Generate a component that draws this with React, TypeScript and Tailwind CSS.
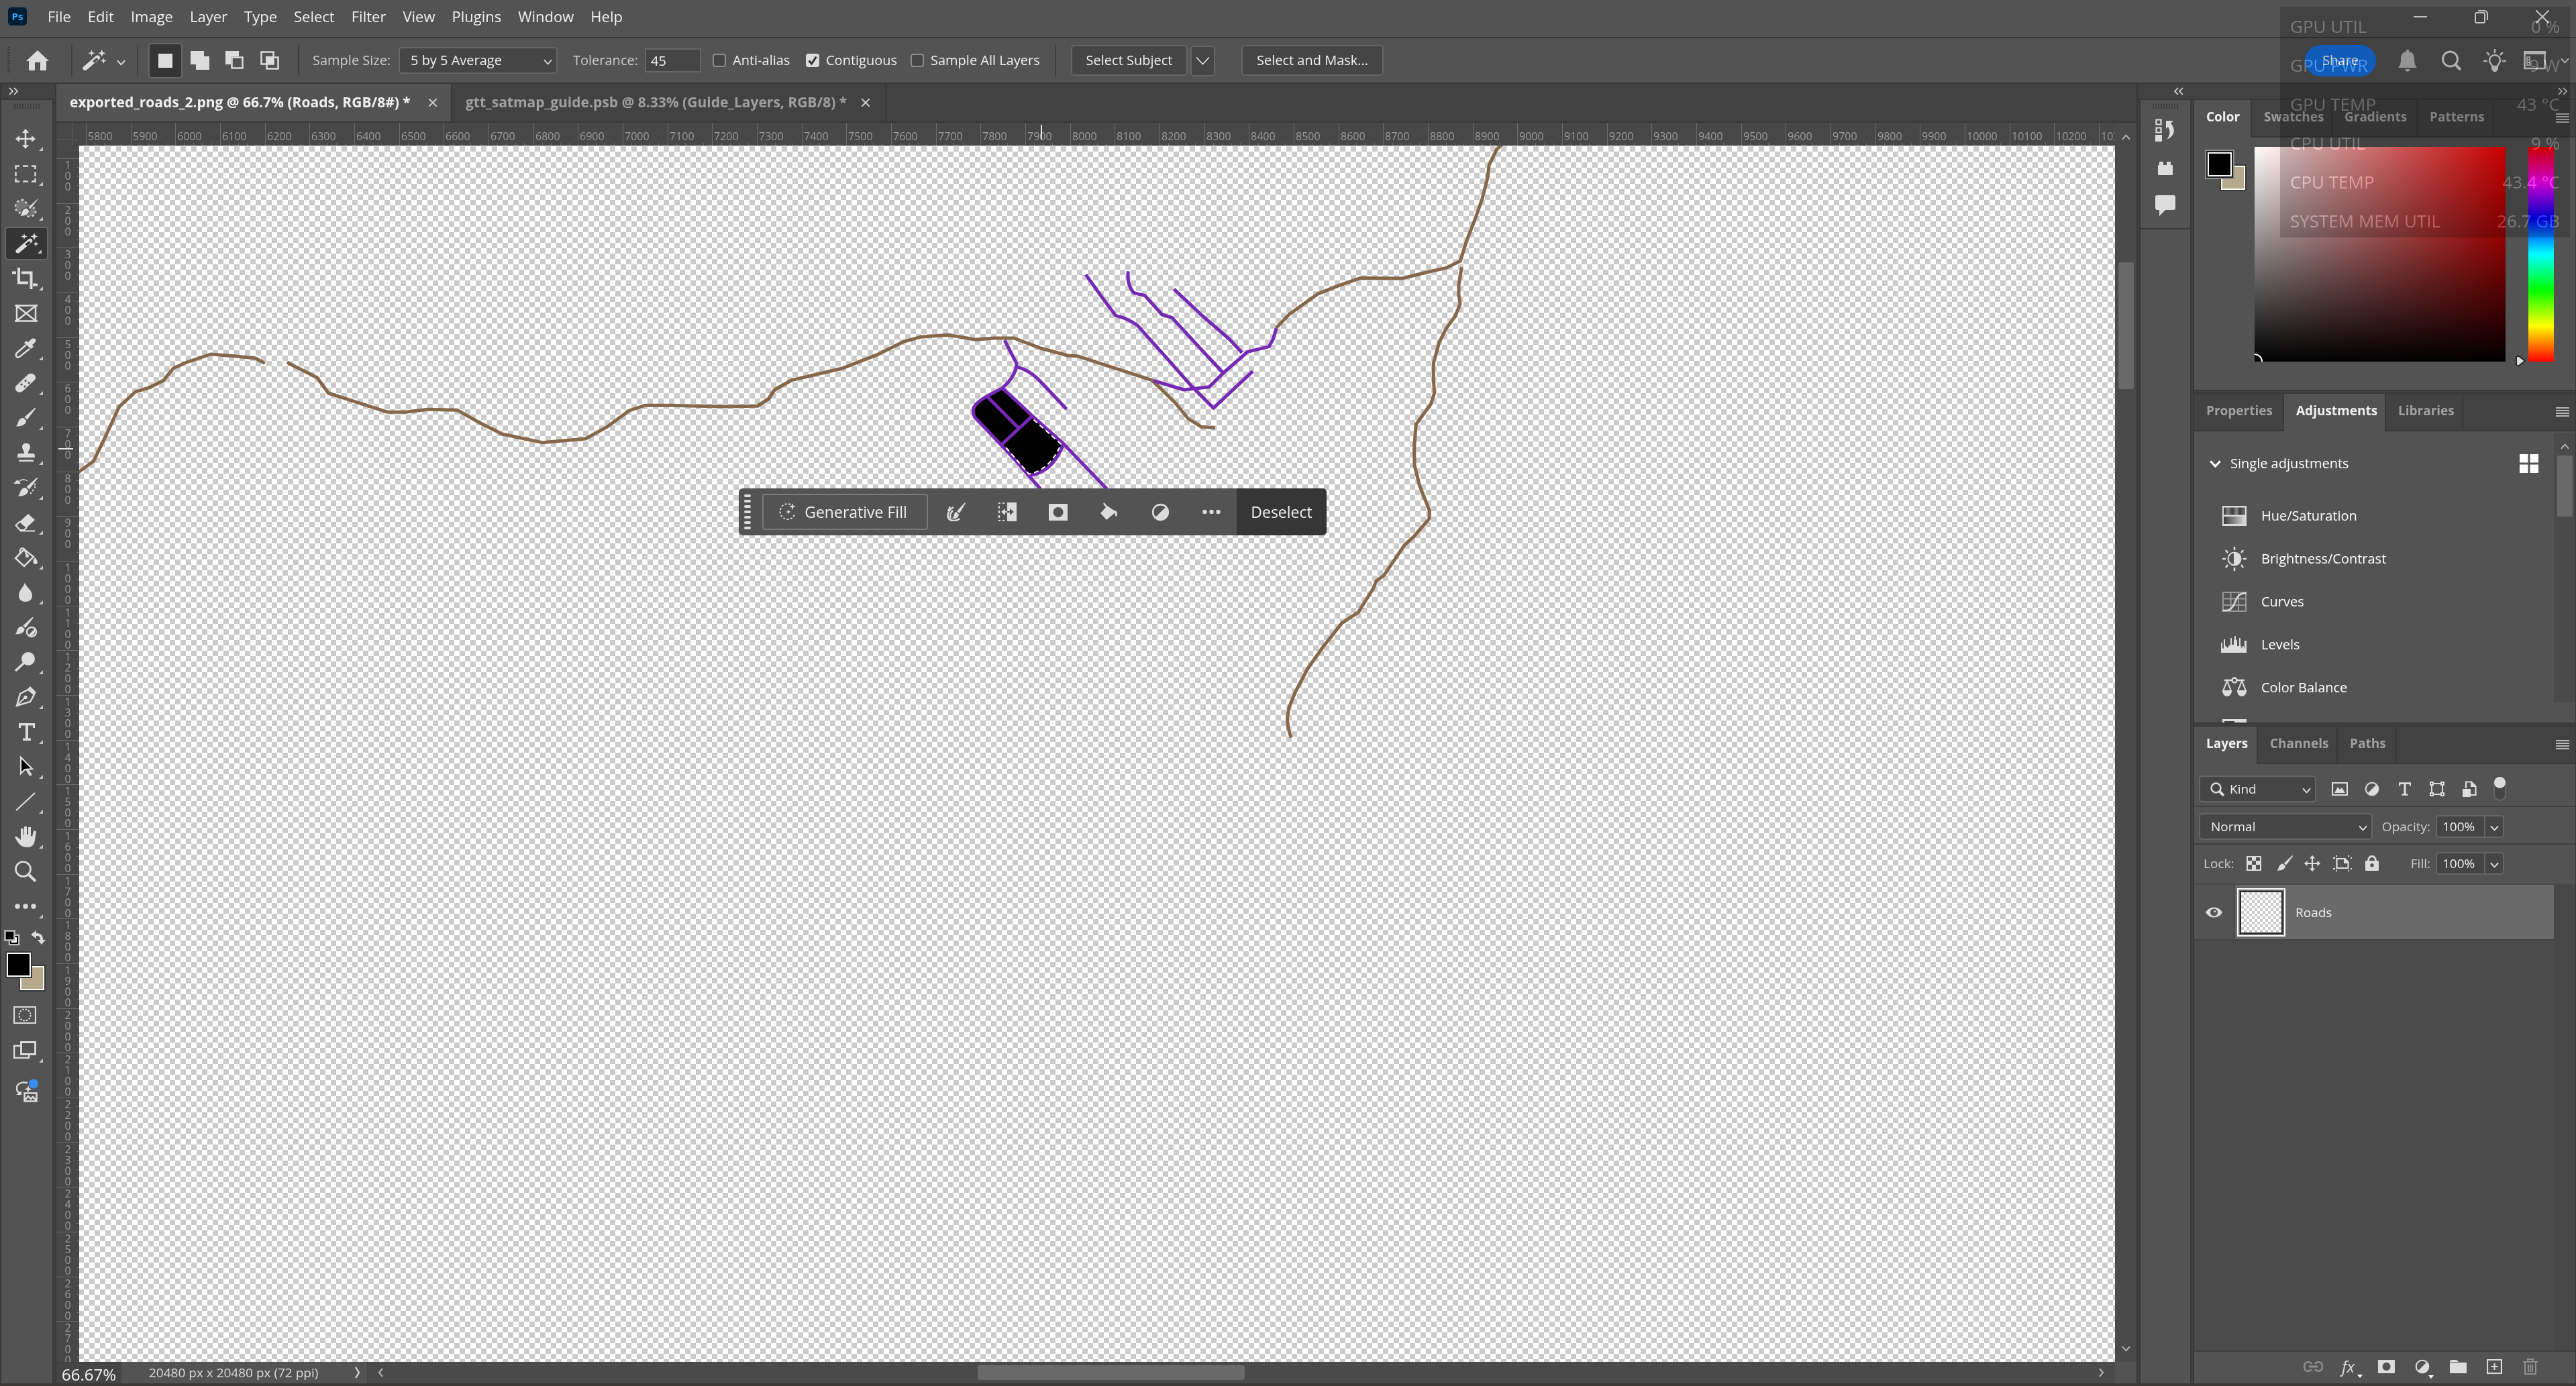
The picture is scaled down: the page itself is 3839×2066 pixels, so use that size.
import React, { useId } from "react";

type Kids = { children?: React.ReactNode };

function Ico({ w = 32, h = 32, box, className = "", children }: Kids & { w?: number; h?: number; box?: string; className?: string }) {
  return (
    <svg width={w} height={h} viewBox={box ?? `0 0 ${w} ${h}`} fill="currentColor" className={`shrink-0 ${className}`} aria-hidden="true">
      {children}
    </svg>
  );
}

function Chevron({ className = "", w = 14, h = 9, sw = 3 }: { className?: string; w?: number; h?: number; sw?: number }) {
  return (
    <svg width={w} height={h} viewBox="0 0 14 9" fill="none" stroke="currentColor" strokeWidth={sw} className={`pointer-events-none shrink-0 ${className}`} aria-hidden="true">
      <path d="M1 1l6 6.5L13 1" />
    </svg>
  );
}

const brush = (
  <>
    <path d="M29.5 1.2c1.200-.6 1.900.3 1.200 1.400L18.500 18.500l-4-3.700z" />
    <path d="M13 16l4.200 4c-.7 5.600-5.200 8.800-16 8.600 3.400-1.500 3-5 4.600-8.200C7.400 17.300 10 15.700 13 16z" />
  </>
);

const wand = (
  <>
    <path d="M2 25.500L20.500 9.500a3.400 3.400 0 0 1 5.200 4.300L7 29.800c-3.700 2.300-7.200-1.300-5-4.300zM19.800 13.300l-4.300 3.700 2.600 2.700 5-4.400c1.400-1.600-.9-3.800-3.300-2z" fillRule="evenodd" />
    <path d="M14 1l1.200 3.300L19 5.500l-3.800 1.200L14 10l-1.200-3.300L9 5.500l3.800-1.200zM29 0l1.500 4 4 1.500-4 1.500L29 11l-1.500-4-4-1.500 4-1.500zM31.500 12.500l1.100 3 3 1.100-3 1.100-1.100 3-1.100-3-3-1.100 3-1.100z" />
  </>
);

const typeGlyph = <path d="M4 3h24v7h-3V6.500h-7V25.500h4V29H10v-3.500h4V6.500H7V10H4z" />;

const halfCircle = (
  <>
    <circle cx="16" cy="16" r="13.500" fill="none" stroke="currentColor" strokeWidth="3" />
    <path d="M25.500 6.500A13.400 13.400 0 0 1 6.500 25.500z" />
  </>
);

const bucket = (
  <>
    <path d="M14 4L28 15 14 29 1 17z" fill="none" stroke="currentColor" strokeWidth="2.500" />
    <path d="M8 10c-1-8 4-10 7-5l3 8" fill="none" stroke="currentColor" strokeWidth="2.500" />
    <circle cx="18.500" cy="13.500" r="2.500" />
    <path d="M30 16c5 5 5 10 1 10s-5-4-1-10z" />
  </>
);

const tools: { name: string; more: boolean; art: React.ReactNode }[] = [
  { name: "Move", more: true, art: <path d="M16 1l5 6h-3.700v7.700H25V11l6 5-6 5v-3.700h-7.700V25H21l-5 6-5-6h3.700v-7.700H7V21l-6-5 6-5v3.700h7.700V7H11z" /> },
  { name: "Rectangular marquee", more: true, art: <path d="M1.500 9V4.500H7M12 4.500h8M25 4.500h5.500V9M30.500 13.500v6M30.500 23v4.500H25M20 27.500h-8M7 27.500H1.500V23M1.500 19.500v-6" fill="none" stroke="currentColor" strokeWidth="2.500" /> },
  {
    name: "Selection brush", more: true, art: (
      <>
        <path d="M10 3c6-1 6 5 11 8 6 3 10 4 10 10 0 8-14 8-18 4C9 22 1 22 1 14 1 8 4 4 10 3z" fill="#777777" stroke="currentColor" strokeWidth="2.500" strokeDasharray="3 4" />
        <g transform="translate(5 -1)" stroke="#535353" strokeWidth="1.500">{brush}</g>
      </>
    ),
  },
  { name: "Magic wand", more: true, art: wand },
  { name: "Crop", more: true, art: <path d="M-4 7.500H2M6 0v22.500h14M10 7.500h14.500V32M27 25.500h7" fill="none" stroke="currentColor" strokeWidth="4" /> },
  { name: "Frame", more: false, art: <path d="M3 3v26M31 3v26M0 4.500h34M0 27.500h34M3 5l28 22M31 5L3 27" fill="none" stroke="currentColor" strokeWidth="2.500" /> },
  { name: "Eyedropper", more: true, art: <><path d="M17 11L3 23c-3 4 0 8 4 6l15-12" fill="none" stroke="currentColor" strokeWidth="2.500" /><path d="M14 8l3-3 3 2c4-4 7-7 10-5s1 6-4 9l2 3-4 3z" /></> },
  { name: "Spot healing", more: true, art: <path fillRule="evenodd" d="M2 20L20 3c6-4 14 2 10 8L12 28C5 33-2 26 2 20zM10 16.500a1.600 1.600 0 1 0 .1 0zM16 11a1.600 1.600 0 1 0 .1 0zM15 19.500a1.600 1.600 0 1 0 .1 0zM21 14a1.600 1.600 0 1 0 .1 0z" /> },
  { name: "Brush", more: true, art: brush },
  { name: "Clone stamp", more: true, art: <path d="M11 7c0-7 12-7 12 0 0 4-3 5-3 10h7c3 0 3 3 3 6H4c0-3 0-6 3-6h7c0-5-3-6-3-10zM6 26.500h22V29H6z" /> },
  { name: "History brush", more: true, art: <><g transform="translate(3 0)">{brush}</g><path d="M-2 10l6-6 5 6z" /><path d="M6 7c4-4 9-4 13-1" fill="none" stroke="currentColor" strokeWidth="1.500" /><path d="M23 24h2M26 20h2M29 15h2M29 11h2" stroke="currentColor" strokeWidth="2.500" /></> },
  { name: "Eraser", more: true, art: <><path d="M20 3l10 9-13 12-10-9z" /><path d="M8 14L1.500 20l6 7H14l4-4M8 28.500h22" fill="none" stroke="currentColor" strokeWidth="2.200" /></> },
  { name: "Paint bucket", more: true, art: bucket },
  { name: "Blur", more: true, art: <path d="M15 1c1 7 11 11 11 20 0 12-20 12-20 0C6 12 14 8 15 1z" /> },
  { name: "Mixer brush", more: false, art: <><g transform="translate(-1 0) scale(.92)">{brush}</g><ellipse cx="25" cy="23" rx="7" ry="7" fill="none" stroke="currentColor" strokeWidth="2.500" /><path d="M30 18L20 28c4 3 12-1 10-10z" /></> },
  { name: "Dodge", more: true, art: <><circle cx="20" cy="11" r="10" /><path d="M14 17L1 29" stroke="currentColor" strokeWidth="3.500" /></> },
  { name: "Pen", more: true, art: <><path d="M3 29L8 11 20 5l9 7-6 11z" fill="none" stroke="currentColor" strokeWidth="2.500" /><path d="M3 29l12-12" stroke="currentColor" strokeWidth="2" /><circle cx="16" cy="16.500" r="2.700" /><path d="M19 4l4-4 9 9-4 4z" /></> },
  { name: "Type", more: true, art: <g transform="translate(2 0)">{typeGlyph}</g> },
  { name: "Path selection", more: true, art: <><path d="M16 16l8 13" stroke="currentColor" strokeWidth="4" /><path d="M9 2v24l6-6 11-1z" fill="#000" stroke="currentColor" strokeWidth="2.200" /></> },
  { name: "Line", more: true, art: <path d="M2 29L30 3" stroke="currentColor" strokeWidth="2.200" /> },
  { name: "Hand", more: true, art: <path d="M9 17V4h4v10l1-1V1h4v12h2V2h4v13l2 1 2-8c1-1 3-1 4 1l-2 12c-1 7-4 11-11 11C9 32 6 27 0 17c1-2 4-1 9 4z" /> },
  { name: "Zoom", more: false, art: <><circle cx="12.500" cy="12.500" r="11" fill="none" stroke="currentColor" strokeWidth="2.700" /><path d="M20.500 20.500L31 30.500" stroke="currentColor" strokeWidth="4" /></> },
  { name: "Edit toolbar", more: true, art: <><circle cx="4" cy="16" r="3.700" /><circle cx="16" cy="16" r="3.700" /><circle cx="28" cy="16" r="3.700" /></> },
];

const menus = ["File", "Edit", "Image", "Layer", "Type", "Select", "Filter", "View", "Plugins", "Window", "Help"];

function MenuBar() {
  return (
    <header className="flex h-[55px] shrink-0 items-center pb-1.5 pl-3 text-[22px] text-[#f0f0f0]">
      <div className="flex h-[27px] w-7 items-center justify-center rounded-[5px] bg-[#001e36] text-[15px] font-bold text-[#31a8ff]">Ps</div>
      <nav className="ml-[31px] flex gap-[25px]">
        {menus.map((m) => <button key={m}>{m}</button>)}
      </nav>
      <div className="ml-auto flex items-center gap-[71px] pr-10">
        <button aria-label="Minimize"><Ico w={20} h={20}><path d="M0 9h20v2H0z" /></Ico></button>
        <button aria-label="Restore">
          <Ico w={20} h={20}><path d="M1 6q0-2 2-2h10q2 0 2 2v11q0 2-2 2H3q-2 0-2-2zM5 1h9q5 0 5 5v9" fill="none" stroke="currentColor" strokeWidth="2" /></Ico>
        </button>
        <button aria-label="Close"><Ico w={20} h={20}><path d="M0 0l20 20M20 0L0 20" stroke="currentColor" strokeWidth="2" /></Ico></button>
      </div>
    </header>
  );
}

function Sep({ className = "" }: { className?: string }) {
  return <div className={`h-[46px] w-0.5 shrink-0 bg-[#3f3f3f] ${className}`} />;
}

function Check({ label, checked, className = "" }: { label: string; checked?: boolean; className?: string }) {
  const id = useId();
  return (
    <div className={`flex shrink-0 items-center ${className}`}>
      <span className="relative flex">
        <input id={id} type="checkbox" defaultChecked={checked} className="peer size-5 appearance-none rounded-[4px] border-2 border-[#8c8c8c] bg-[#454545] checked:border-[#dcdcdc] checked:bg-[#dcdcdc]" />
        <svg width="20" height="20" viewBox="0 0 20 20" className="pointer-events-none absolute inset-0 hidden text-[#333333] peer-checked:block" fill="none" stroke="currentColor" strokeWidth="3" aria-hidden="true">
          <path d="M4.500 10.500l4 4.500 7-10.500" />
        </svg>
      </span>
      <label htmlFor={id} className="pl-2.5 whitespace-nowrap text-[#f0f0f0]">{label}</label>
    </div>
  );
}

function OptionsBar() {
  const field = "rounded-[5px] border-2 border-[#666666] bg-[#454545] text-[#f0f0f0]";
  return (
    <div className="flex h-[70px] shrink-0 items-center border-y-2 border-[#383838] text-[20px] text-[#cccccc]">
      <div className="ml-[11px] h-10 w-1 shrink-0 bg-[repeating-linear-gradient(to_bottom,#3c3c3c_0_2px,transparent_2px_4px)]" />
      <button aria-label="Home" className="ml-[24px] text-[#dcdcdc]">
        <Ico w={34} h={32}><path d="M17 1l17 16h-4v14h-9V19h-8v12H4V17H0z" /></Ico>
      </button>
      <Sep className="ml-[33px]" />
      <button aria-label="Magic wand presets" className="ml-[14px] flex items-center text-[#dcdcdc]">
        <Ico w={38} h={36} box="0 -1 37 34">{wand}</Ico>
        <Chevron className="mt-1.5 ml-[14px]" w={13} sw={2} />
      </button>
      <Sep className="ml-[17px]" />
      <div className="ml-[15px] flex text-[#dcdcdc]">
        <button aria-label="New selection" className="flex h-[53px] w-[51px] items-center justify-center rounded-[5px] border-2 border-[#666666] bg-[#353535]"><Ico w={21} h={21}><path d="M0 0h21v21H0z" /></Ico></button>
        <button aria-label="Add to selection" className="flex w-[52px] items-center justify-center"><Ico w={28} h={28}><path d="M0 0h20v8h8v20H8v-8H0z" /></Ico></button>
        <button aria-label="Subtract from selection" className="flex w-[52px] items-center justify-center"><Ico w={28} h={28}><path d="M0 0h20v8H8v12H0z" /><path d="M9.500 9.500h16v16h-16z" fill="none" stroke="currentColor" strokeWidth="2.500" /></Ico></button>
        <button aria-label="Intersect with selection" className="flex w-[52px] items-center justify-center"><Ico w={28} h={28}><path d="M1.500 1.500h18v18h-18zM9.500 9.500h17v17h-17z" fill="none" stroke="currentColor" strokeWidth="2.500" /><path d="M8 8h12v12H8z" /></Ico></button>
      </div>
      <Sep className="ml-[16px]" />
      <label htmlFor="sample" className="ml-[20px] w-[128px] shrink-0 whitespace-nowrap">Sample Size:</label>
      <div className="relative flex shrink-0 items-center">
        <select id="sample" className={`h-10 w-[237px] appearance-none pl-4 ${field}`}><option>5 by 5 Average</option></select>
        <Chevron className="absolute right-2 mt-1" w={13} sw={2} />
      </div>
      <label htmlFor="tolerance" className="ml-[23px] w-[107px] shrink-0 whitespace-nowrap">Tolerance:</label>
      <input id="tolerance" defaultValue="45" className="h-9 w-[84px] border-2 border-[#666666] bg-[#454545] pl-[7px] text-[#f0f0f0]" />
      <Check label="Anti-alias" className="ml-[17px] w-[139px]" />
      <Check label="Contiguous" checked className="w-[156px]" />
      <Check label="Sample All Layers" className="w-[215px]" />
      <Sep />
      <button className={`ml-[22px] h-[46px] w-[174px] shrink-0 ${field}`}>Select Subject</button>
      <button aria-label="Select Subject options" className={`mt-0.5 ml-1 flex h-[46px] w-[37px] shrink-0 items-center justify-center ${field}`}><Chevron w={23} h={14} sw={1} /></button>
      <button className={`ml-[39px] h-[46px] w-[212px] shrink-0 ${field}`}>Select and Mask...</button>
      <div className="ml-auto flex shrink-0 items-center pr-[10px] text-[#dcdcdc]">
        <button className="h-[47px] w-[106px] rounded-full bg-[#1473e6] text-[20px] text-white">Share</button>
        <button aria-label="Notifications" className="ml-[33px] text-[#bababa]"><Ico w={28} h={34}><path d="M12 1h4v3c6 1 8 5 8 11 0 8 2 10 4 13H0c2-3 4-5 4-13C4 9 6 5 12 4zM10 30h8c-1 5-7 5-8 0z" /></Ico></button>
        <button aria-label="Search" className="ml-[37px]"><Ico w={29} h={30}><circle cx="12.500" cy="13" r="11" fill="none" stroke="currentColor" strokeWidth="3" /><path d="M20 21l8 8" stroke="currentColor" strokeWidth="4" /></Ico></button>
        <button aria-label="Tips" className="ml-[33px]"><Ico w={34} h={36}><path d="M17 1v6M5 6l4 4M29 6l-4 4M0 19h6M28 19h6" stroke="currentColor" strokeWidth="2.500" /><path d="M13 27c0-4-4-4-4-9a8 8 0 0 1 16 0c0 5-4 5-4 9z" fill="none" stroke="currentColor" strokeWidth="2.500" /><path d="M12 26h10v5l-3 4h-4l-3-4z" /></Ico></button>
        <button aria-label="Workspace" className="ml-[26px] flex items-center"><Ico w={33} h={28}><path d="M1.500 2h30v24h-30z" fill="none" stroke="currentColor" strokeWidth="2.500" /><path d="M0 0h33v5H0z" /><path d="M5 9h4v12H5zM5 13h4M5 17h4" fill="none" stroke="currentColor" strokeWidth="1.500" /></Ico><Chevron className="ml-[22px]" w={13} sw={2} /></button>
      </div>
    </div>
  );
}

function DoubleChevron({ left = false }: { left?: boolean }) {
  return <Ico w={14} h={12}><path d={left ? "M6 1L1 6l5 5M13 1L8 6l5 5" : "M1 1l5 5-5 5M8 1l5 5-5 5"} fill="none" stroke="currentColor" strokeWidth="1.700" /></Ico>;
}

function Grip() {
  return <div className="mx-auto h-2 w-[38px] shrink-0 bg-[repeating-linear-gradient(to_right,#3f3f3f_0_2px,transparent_2px_4px)]" />;
}

function Toolbar() {
  return (
    <aside className="flex w-[84px] shrink-0 flex-col border-x-2 border-[#383838] bg-[#424242]">
      <div className="flex h-[22px] shrink-0 items-center pl-[11px] text-[#dcdcdc]"><DoubleChevron /></div>
      <div className="mr-0.5 flex flex-1 flex-col border-t-2 border-r-2 border-[#383838] bg-[#535353] pt-1.5">
        <Grip />
        <div className="mt-[18px] ml-[5px] flex flex-col">
          {tools.map((t) => (
            <button key={t.name} aria-label={t.name} className={t.name === "Magic wand" ? "relative my-px flex h-[50px] w-[65px] items-center justify-center rounded-[5px] border-2 border-[#666666] bg-[#353535] pr-[3px] text-[#dcdcdc]" : "relative flex h-[52px] w-[65px] items-center justify-center pr-[3px] text-[#dcdcdc]"}>
              <Ico w={32} h={32} className="overflow-visible">{t.art}</Ico>
              {t.more && <svg width="6" height="6" viewBox="0 0 6 6" fill="#c4c4c4" className="absolute right-[8px] bottom-[8px]" aria-hidden="true"><path d="M6 0v6H0z" /></svg>}
            </button>
          ))}
        </div>
        <div className="mt-[9px] flex items-center justify-between pr-2.5 pl-1 text-[#dcdcdc]">
          <button aria-label="Default colors"><Ico w={24} h={24}><path d="M8 8h14v14H8z" fill="#fff" stroke="#bbbbbb" strokeWidth="2.500" /><path d="M10 10h10v10H10z" fill="none" stroke="#000" strokeWidth="2" /><path d="M1.500 1.500h14v14h-14z" fill="#000" stroke="#bbbbbb" strokeWidth="2.500" /></Ico></button>
          <button aria-label="Swap colors"><Ico w={22} h={22}><path d="M0 6l8-6v4c8 0 10 4 10 10h4l-6 7-6-7h4c0-4-1-6-6-6v4z" /></Ico></button>
        </div>
        <div className="relative mt-2 ml-[6px] h-[60px] w-[60px] shrink-0">
          <button aria-label="Background color" className="absolute right-0 bottom-0 size-10 border-2 border-[#383838] bg-[#b7a98e] outline-2 -outline-offset-4 outline-white" />
          <button aria-label="Foreground color" className="absolute top-0 left-0 size-10 border-2 border-[#383838] bg-black outline-2 -outline-offset-4 outline-white" />
        </div>
        <button aria-label="Quick mask" className="mt-[22px] ml-[18px] text-[#dcdcdc]"><Ico w={34} h={26}><path d="M1 1h32v24H1z" fill="none" stroke="currentColor" strokeWidth="2.200" /><circle cx="17" cy="13" r="8.500" fill="none" stroke="currentColor" strokeWidth="2" strokeDasharray="2.500 2" /></Ico></button>
        <button aria-label="Screen mode" className="relative mt-[26px] ml-[18px] text-[#dcdcdc]"><Ico w={34} h={26}><path d="M11 7H1v18h22v-5" fill="none" stroke="currentColor" strokeWidth="2.500" /><path d="M11.500 1.500h21v18h-21z" fill="none" stroke="currentColor" strokeWidth="2.800" /></Ico><svg width="6" height="6" viewBox="0 0 6 6" fill="#c4c4c4" className="absolute top-[26px] left-[38px]" aria-hidden="true"><path d="M6 0v6H0z" /></svg></button>
        <button aria-label="Generate image" className="mt-[30px] ml-[21px] text-[#dcdcdc]">
          <Ico w={36} h={35}><path d="M18 6C8 4 2 8 2 14c0 4 2 6 4 7" fill="none" stroke="currentColor" strokeWidth="2.500" /><path d="M1 24l8-6v6zM19 10l1.500 4 4 1.500-4 1.500-1.500 4-1.500-4-4-1.500 4-1.500z" /><path d="M13.500 21.500h18v12h-18zM14 32l5-6 4 4 3-3 5 5" fill="none" stroke="currentColor" strokeWidth="2.500" /><circle cx="27" cy="7.500" r="7" fill="#378ef0" /></Ico>
        </button>
      </div>
    </aside>
  );
}

const STEP = 200 / 3;
const hMarks = Array.from({ length: 46 }, (_, i) => ({ value: 5800 + i * 100, at: 10 + i * STEP }));
const vMarks = Array.from({ length: 27 }, (_, i) => ({ value: 100 + i * 100, at: 19 + i * STEP }));
const minor = [1, 2, 3, 4];

function HorizontalRuler() {
  return (
    <svg className="h-[34px] min-w-0 flex-1 bg-[#474747] font-['Open_Sans',sans-serif] text-[16px]" fill="#9c9c9c" aria-label="Horizontal ruler">
      {hMarks.map((m) => (
        <g key={m.value}>
          <rect x={Math.round(m.at)} y="0" width="1" height="34" fill="#6c6c6c" />
          {minor.map((k) => <rect key={k} x={Math.round(m.at + (k * STEP) / 5)} y="30" width="1" height="4" fill="#6c6c6c" />)}
          <text x={Math.round(m.at) + 3} y="26">{m.value}</text>
        </g>
      ))}
      <rect x="1433" y="3" width="2" height="22" fill="#e6e6e6" />
    </svg>
  );
}

function VerticalRuler() {
  return (
    <svg className="w-[34px] shrink-0 bg-[#474747] font-['Open_Sans',sans-serif] text-[16px]" fill="#9c9c9c" aria-label="Vertical ruler">
      {vMarks.map((m) => (
        <g key={m.value}>
          <rect x="0" y={Math.round(m.at)} width="34" height="1" fill="#6c6c6c" />
          {minor.map((k) => <rect key={k} x="30" y={Math.round(m.at + (k * STEP) / 5)} width="4" height="1" fill="#6c6c6c" />)}
          {String(m.value).split("").map((d, i) => <text key={i} x="17" textAnchor="middle" y={Math.round(m.at) + 16 + i * 16}>{d}</text>)}
        </g>
      ))}
      <rect x="30" y="6" width="4" height="1" fill="#6c6c6c" />
      <rect x="3" y="451" width="22" height="2" fill="#e6e6e6" />
    </svg>
  );
}

function Roads() {
  return (
    <svg className="size-full" fill="none" strokeLinejoin="round" strokeWidth="5" aria-label="Roads artwork">
      <g stroke="#86674a">
        <g transform="translate(-8 273) scale(.70153 .33333)">
          <path vectorEffect="non-scaling-stroke" d="M6 648L42 592 70 470 96 350 131 282 162 262 190 232 212 176 240 150 291 114 340 122 386 132 406 155" />
          <path vectorEffect="non-scaling-stroke" d="M453 151L517 219 541 288 600 328 667 373 705 373 752 361 815 364 860 418 910 471 995 509 1087 492 1132 440 1180 366 1213 343 1270 343 1380 348 1452 346 1476 314 1488 274 1525 230" />
        </g>
        <g transform="translate(962 143) scale(.63776 .33333)">
          <path vectorEffect="non-scaling-stroke" d="M76 737L103 702 117 662 157 620 275 567 358 505 418 448 457 427 523 418 586 439 630 432 676 432 738 477 802 510 824 512 998 620 1052 720 1083 792 1114 829 1146 833" />
        </g>
        <g transform="translate(1742 -7) scale(.33333 .57398)">
          <path vectorEffect="non-scaling-stroke" d="M125 486L185 450 310 398 400 377 503 356 690 357 800 341 885 330 949 312 978 258 1015 203 1047 150 1070 98 1078 62 1112 22 1140 6" />
          <path vectorEffect="non-scaling-stroke" d="M955 328L942 374 942 400 948 424 925 456 885 488 854 524 829 577 829 620 833 655 817 684 751 736 743 795 744 842 766 894 811 960 810 981 740 1028 699 1050 608 1128 573 1143 560 1162 493 1224 420 1252 335 1314 265 1372 210 1433 183 1472 175 1500 180 1526 192 1550" />
        </g>
      </g>
      <g stroke="#7629b5" transform="translate(962 143) scale(.63776 .33333)">
        <path fill="#000" stroke="none" d="M649 655L719 780 792 905C778 970 756 1025 712 1045L648 910 584 785C576 750 580 728 613 692z" />
        <path vectorEffect="non-scaling-stroke" d="M654 441L682 545C682 585 668 622 649 655L613 692C580 728 576 750 584 785L646 910 678 975 712 1050 738 1106M649 655L719 780 792 905 893 1106M613 692L687 835M719 780L646 910M792 905C778 970 760 1030 712 1048M682 560C710 575 725 600 740 630L799 750" />
        <path vectorEffect="non-scaling-stroke" d="M844 148L880 245 914 332C935 340 950 355 965 376L1030 515 1090 645 1142 745 1234 580M943 133C940 175 945 205 956 230L982 242 1022 327 1045 340 1110 475 1165 588M1050 213L1115 330 1180 438 1209 497M1002 622L1073 663 1132 650 1165 588 1222 493 1272 470 1282 435 1289 388" />
        <path vectorEffect="non-scaling-stroke" stroke="#fff" strokeWidth="2" strokeDasharray="7 5" d="M722 797L786 906C772 968 750 1025 711 1040L654 914" />
      </g>
    </svg>
  );
}

function ContextBar() {
  const item = "flex h-full w-[76px] shrink-0 items-center justify-center text-[#dcdcdc]";
  return (
    <div role="toolbar" aria-label="Contextual task bar" className="absolute top-[511px] left-[983px] flex h-[70px] items-center overflow-hidden rounded-[6px] bg-[#535353] text-[23px] text-[#f0f0f0]">
      <div className="ml-2 flex shrink-0 flex-col gap-[4px]">
        {[0, 1, 2, 3, 4, 5, 6].map((i) => <span key={i} className="h-1 w-2.5 rounded-full bg-[#dcdcdc]" />)}
      </div>
      <button className="ml-[17px] flex h-[54px] w-[247px] items-center justify-center rounded-[4px] border-2 border-[#7a7a7a] pr-1.5 whitespace-nowrap">
        <Ico w={26} h={28} className="mr-3 text-[#dcdcdc]"><path d="M17 3C4-1-1 12 3 19c5 9 18 8 20-2" fill="none" stroke="currentColor" strokeWidth="2" strokeDasharray="3 2.500" /><path d="M20 1l1.300 3.700L25 6l-3.700 1.300L20 11l-1.300-3.700L15 6l3.700-1.300zM14 10l1 3 3 1-3 1-1 3-1-3-3-1 3-1z" /></Ico>
        Generative Fill
      </button>
      <button aria-label="Modify selection" className={`ml-1 ${item}`}><Ico w={28} h={28}><path d="M27 0l1 1-9 15-4-3zM14 14l4 4c-1 5-5 7-10 6 4-3 2-9 6-10z" /><path d="M5 6L2 13M10 7C1 12-1 22 5 26c5 2 11 1 14-2M9 12c-4 4-5 8-3 12" fill="none" stroke="currentColor" strokeWidth="2.500" /></Ico></button>
      <button aria-label="Invert selection" className={item}><Ico w={27} h={28}><path d="M13 0h14v28H13zM0 0h3v2H0zM6 0h3v2H6zM0 5h2v4H0zM0 12h2v4H0zM0 19h2v4H0zM0 26h3v2H0zM6 26h3v2H6z" /><path d="M4 14l6-5v4h3v2h-3v4z" /><path d="M23 14l-6-5v4h-4v2h4v4z" fill="#535353" /></Ico></button>
      <button aria-label="Mask" className={item}><Ico w={28} h={25}><path fillRule="evenodd" d="M0 0h28v25H0zM14 5a7.500 7.500 0 1 0 .1 0z" /></Ico></button>
      <button aria-label="Fill selection" className={item}><Ico w={26} h={28}><path d="M10 5l12 8v2L9 26 0 16zM21 12c4 0 5 6 3 9-3-1-2-5-3-9z" /><path d="M5 1l9 12" stroke="currentColor" strokeWidth="2.500" /></Ico></button>
      <button aria-label="Adjustment layer" className={item}><Ico w={27} h={27} box="0 0 32 32">{halfCircle}</Ico></button>
      <button aria-label="More options" className={item}><Ico w={27} h={8}><circle cx="3.500" cy="4" r="3.200" /><circle cx="13.500" cy="4" r="3.200" /><circle cx="23.500" cy="4" r="3.200" /></Ico></button>
      <button className="h-full w-[134px] bg-[#363636]">Deselect</button>
    </div>
  );
}

function DocTab({ title, active, className = "" }: { title: string; active?: boolean; className?: string }) {
  return (
    <div className={`flex shrink-0 items-center justify-between border-r-2 border-[#383838] pl-5 font-bold whitespace-nowrap ${active ? "bg-[#535353] text-[#f0f0f0]" : "bg-[#424242] text-[#a0a0a0]"} ${className}`}>
      <button role="tab" aria-selected={!!active}>{title}</button>
      <button aria-label={`Close ${title}`} className="text-[#c8c8c8]"><Ico w={12} h={12}><path d="M0 0l12 12M12 0L0 12" stroke="currentColor" strokeWidth="2" /></Ico></button>
    </div>
  );
}

function Document() {
  return (
    <main className="flex min-w-0 flex-1 flex-col">
      <div role="tablist" aria-label="Documents" className="flex h-[58px] shrink-0 border-b-2 border-[#383838] bg-[#424242] text-[21px]">
        <DocTab title="exported_roads_2.png @ 66.7% (Roads, RGB/8#) *" active className="w-[590px] pr-[21px]" />
        <DocTab title="gtt_satmap_guide.psb @ 8.33% (Guide_Layers, RGB/8) *" className="w-[647px] pr-[23px]" />
      </div>
      <div className="flex min-h-0 flex-1">
        <div className="flex min-w-0 flex-1 flex-col">
          <div className="flex h-[34px] shrink-0">
            <div className="flex w-[34px] shrink-0 bg-[#474747]">
              <Ico w={34} h={34}><path d="M24.500 0v34M0 24.500h34" stroke="#6c6c6c" strokeWidth="1" strokeDasharray="1 1" /></Ico>
            </div>
            <HorizontalRuler />
          </div>
          <div className="flex min-h-0 flex-1">
            <VerticalRuler />
            <div className="relative min-w-0 flex-1 overflow-hidden bg-[conic-gradient(#ffffff_25%,#cbcbcb_0_50%,#ffffff_0_75%,#cbcbcb_0)] bg-[length:16px_16px] bg-[position:7px_1px]">
              <Roads />
              <ContextBar />
            </div>
          </div>
        </div>
        <div className="flex w-8 shrink-0 flex-col items-center bg-[#4a4a4a] text-[#b4b4b4]">
          <Chevron className="mt-[17px] rotate-180" w={13} sw={2} />
          <div className="mt-[182px] h-[189px] w-[23px] rounded-[3px] bg-[#696969]" />
          <Chevron className="mt-auto mb-[15px]" w={13} sw={2} />
        </div>
      </div>
      <div className="flex h-8 shrink-0 items-center bg-[#4a4a4a] text-[#b4b4b4]">
        <div className="flex h-full w-[95px] shrink-0 items-center border-t border-[#3c3c3c] bg-[#454545] pt-1 pl-2 text-[24px] text-[#f4f4f4]">66.67%</div>
        <div className="flex h-full w-[370px] shrink-0 items-center justify-between border-x-2 border-[#454545] bg-[#535353] pr-[10px] pl-[41px] text-[19px] whitespace-nowrap text-[#dcdcdc]">
          20480 px x 20480 px (72 ppi)
          <Ico w={9} h={18}><path d="M2 1l5 8-5 8" fill="none" stroke="currentColor" strokeWidth="2.200" /></Ico>
        </div>
        <Ico w={9} h={14} className="ml-[14px]"><path d="M7 1L2 7l5 6" fill="none" stroke="currentColor" strokeWidth="2" /></Ico>
        <div className="ml-1.5 flex-1"><div className="ml-[34.500%] h-[22px] w-[398px] rounded-[3px] bg-[#696969]" /></div>
        <Ico w={9} h={14} className="mr-4"><path d="M2 1l5 6-5 6" fill="none" stroke="currentColor" strokeWidth="2" /></Ico>
        <div className="h-full w-8 shrink-0 bg-[#535353]" />
      </div>
    </main>
  );
}

function IconDock() {
  return (
    <aside className="flex flex-1 flex-col bg-[#535353]">
      <div className="flex h-[193px] shrink-0 flex-col items-center border-b-2 border-[#383838] pt-1.5 text-[#dcdcdc]">
        <Grip />
        <button aria-label="History" className="mt-[14px]"><Ico w={30} h={34}><path d="M1.500 1.500h7v7h-7zM1.500 13.500h7v7h-7z" fill="none" stroke="currentColor" strokeWidth="2.200" /><path d="M0 24h10v10H0zM16 3h11l-4 4c8 8 6 19-6 24 5-6 6-13 2-19l-3 3z" /></Ico></button>
        <button aria-label="Plugins" className="mt-[30px]"><Ico w={22} h={20}><path d="M2 5V1q0-1 1-1h4q1 0 1 1v4h5V1q0-1 1-1h4q1 0 1 1v4h2q1 0 1 1v13q0 1-1 1H1q-1 0-1-1V6q0-1 1-1z" /></Ico></button>
        <button aria-label="Comments" className="mt-[30px]"><Ico w={30} h={32}><path d="M3 0h24q3 0 3 3v16q0 3-3 3H15L6 31v-9H3q-3 0-3-3V3q0-3 3-3z" /></Ico></button>
      </div>
    </aside>
  );
}

function PanelTabs({ tabs, active }: { tabs: [string, string][]; active: string }) {
  return (
    <div role="tablist" className="flex h-14 shrink-0 bg-[#424242] text-[19px] font-bold">
      {tabs.map(([name, width]) => (
        <button key={name} role="tab" aria-selected={name === active} className={`flex shrink-0 items-center border-r-2 border-[#383838] pb-1.5 pl-[18px] whitespace-nowrap ${width} ${name === active ? "bg-[#535353] text-[#f0f0f0]" : "border-b-2 pt-0.5 text-[#a0a0a0]"}`}>{name}</button>
      ))}
      <div className="flex flex-1 items-center justify-end border-b-2 border-[#383838] pr-[9px] text-[#b9b9b9]">
        <button aria-label="Panel menu"><Ico w={20} h={15}><path d="M0 0h20v2H0zM0 4h20v2H0zM0 8h20v2H0zM0 12h20v2H0z" /></Ico></button>
      </div>
    </div>
  );
}

function ColorPanel() {
  return (
    <section aria-label="Color" className="flex h-[434px] shrink-0 flex-col border-b-2 border-[#383838] bg-[#535353]">
      <PanelTabs active="Color" tabs={[["Color", "w-[86px]"], ["Swatches", "w-[120px]"], ["Gradients", "w-[127px]"], ["Patterns", "w-[114px]"]]} />
      <div className="flex pt-3.5 pl-4">
        <div className="relative mt-1 h-[62px] w-[62px] shrink-0">
          <button aria-label="Background" className="absolute right-0 bottom-0 size-10 border-2 border-[#383838] bg-[#b7a98e] outline-2 -outline-offset-4 outline-white" />
          <button aria-label="Foreground" className="absolute top-0 left-0 size-[44px] border-2 border-[#8c8c8c] bg-[#1c1c1c] p-0.5"><span className="block size-full border-2 border-white bg-black" /></button>
        </div>
        <div className="relative ml-3 h-80 w-[374px] shrink-0 overflow-hidden bg-[linear-gradient(to_top,#000000,transparent),linear-gradient(to_right,#ffffff,#ff0000)]">
          <div className="absolute -bottom-3 -left-3 size-6 rounded-full border-2 border-white" />
        </div>
        <div className="flex w-[34px] shrink-0 items-end justify-end pr-[3px]">
          <Ico w={17} h={18} className="-mb-2"><path d="M2 5q0-4 4-3l9 7-9 7q-4 1-4-3z" fill="#dcdcdc" stroke="#222222" strokeWidth="2" /></Ico>
        </div>
        <div className="h-80 w-[38px] shrink-0 bg-[linear-gradient(to_top,#ff0000,#ffff00,#00ff00,#00ffff,#0000ff,#ff00ff,#ff0000)]" />
      </div>
    </section>
  );
}

const adjustments: [string, React.ReactNode][] = [
  ["Hue/Saturation", <><defs><linearGradient id="sat"><stop stopColor="#3a3a3a" /><stop offset="1" stopColor="#dcdcdc" /></linearGradient><linearGradient id="hue"><stop stopColor="#333333" /><stop offset=".2" stopColor="#808080" /><stop offset=".4" stopColor="#3a3a3a" /><stop offset=".6" stopColor="#8a8a8a" /><stop offset=".75" stopColor="#3a3a3a" /><stop offset="1" stopColor="#777777" /></linearGradient></defs><path d="M0 0h36v30H0z" /><path d="M2 2.500h32v11H2z" fill="url(#hue)" /><path d="M2 16h32v11H2z" fill="url(#sat)" /></>],
  ["Brightness/Contrast", <><circle cx="18" cy="15" r="9.500" fill="none" stroke="currentColor" strokeWidth="2" /><path d="M17 5.500a10 9.500 0 0 1 0 19z" /><path d="M18-3v5M18 28v5M0 15h5M31 15h5M5 2l3 4M31 2l-3 4M5 28l3-4M31 28l-3-4" stroke="currentColor" strokeWidth="2.500" /></>],
  ["Curves", <><path d="M1 1h34v28H1zM12.500 1v28M24 1v28M1 10.500h34M1 20h34" fill="none" stroke="#989898" strokeWidth="2" /><path d="M0 28c26 2 12-26 36-26" fill="none" stroke="currentColor" strokeWidth="2.500" /></>],
  ["Levels", <path d="M-2 27V12H0v8l2 1V7h2v9l4 4 2-4h2V5h2v10h3V8l1-1V2h2v5l2 2v8h3V5h2v11l2 5 1-4h2v4l1-1V9h3v18z" />],
  ["Color Balance", <><path d="M3 4h30" stroke="currentColor" strokeWidth="2.500" /><circle cx="18" cy="4" r="3.500" fill="#535353" stroke="currentColor" strokeWidth="2.500" /><path d="M7 5L1 20h12zM29 5l-6 15h12z" fill="none" stroke="currentColor" strokeWidth="2" /><path d="M0 19h14c0 12-14 12-14 0zM22 19h14c0 12-14 12-14 0z" /></>],
];

function AdjustmentsPanel() {
  return (
    <section aria-label="Adjustments" className="mt-0.5 flex h-[494px] shrink-0 flex-col border-y-2 border-[#383838] bg-[#535353]">
      <PanelTabs active="Adjustments" tabs={[["Properties", "w-[134px]"], ["Adjustments", "w-[152px]"], ["Libraries", "w-[115px]"]]} />
      <div className="flex min-h-0 flex-1 overflow-hidden">
        <div className="min-w-0 flex-1 overflow-hidden text-[20px] text-white">
          <button className="mt-[22px] flex h-[52px] w-full items-center pr-[23px] pl-[23px]">
            <Chevron w={17} h={11} sw={2.5} />
            <span className="ml-[14px]">Single adjustments</span>
            <Ico w={28} h={28} className="ml-auto"><path d="M0 0h12.500v12.500H0zM15.500 0H28v12.500H15.500zM0 15.500h12.500V28H0zM15.500 15.500H28V28H15.500z" /></Ico>
          </button>
          <div className="mt-5">
            {adjustments.map(([name, art]) => (
              <button key={name} className="flex h-16 w-full items-center pl-[42px]">
                <Ico w={36} h={30} className="overflow-visible text-[#dcdcdc]">{art}</Ico>
                <span className="ml-[22px]">{name}</span>
              </button>
            ))}
            <button aria-label="Black and white" className="pt-[15px] pl-[42px] text-[#dcdcdc]"><Ico w={36} h={30}><path d="M0 0h36v30H0z" /><path d="M3 3h15v24H3z" fill="#444444" /></Ico></button>
          </div>
        </div>
        <div className="mt-0.5 flex w-8 shrink-0 flex-col items-center bg-[#4a4a4a] text-[#b4b4b4]">
          <Chevron className="mt-[16px] rotate-180" w={13} sw={2} />
          <div className="mt-[9px] h-[91px] w-[23px] rounded-[2px] bg-[#696969]" />
          <div className="mt-auto h-[30px] w-full bg-[#535353]" />
        </div>
      </div>
    </section>
  );
}

function Percent({ id, label, className = "" }: { id: string; label: string; className?: string }) {
  return (
    <div className={`flex items-center ${className}`}>
      <label htmlFor={id} className="mr-2 text-[#cccccc]">{label}</label>
      <div className="flex h-[34px] w-[102px] items-center rounded-[5px] border-2 border-[#666666] bg-[#454545]">
        <input id={id} defaultValue="100%" className="h-full w-[72px] shrink-0 border-r-2 border-[#666666] pl-2 text-[#f0f0f0] outline-none" />
        <button aria-label={`${label} slider`} className="flex flex-1 justify-center pt-1"><Chevron w={13} sw={2} /></button>
      </div>
    </div>
  );
}

function LayersPanel() {
  const field = "h-10 appearance-none rounded-[5px] border-2 border-[#666666] bg-[#454545] text-[#f0f0f0]";
  return (
    <section aria-label="Layers" className="mt-0.5 flex min-h-0 flex-1 flex-col border-t-2 border-[#383838] bg-[#535353] text-[19px] text-[#dcdcdc]">
      <PanelTabs active="Layers" tabs={[["Layers", "w-[95px]"], ["Channels", "w-[119px]"], ["Paths", "w-[88px]"]]} />
      <div className="flex h-16 shrink-0 items-center border-b-2 border-[#3f3f3f] pt-3 pl-[7px]">
        <div className="relative flex items-center">
          <Ico w={21} h={21} className="absolute left-[17px]"><circle cx="8.500" cy="8.500" r="7" fill="none" stroke="currentColor" strokeWidth="2.500" /><path d="M13 13l7 7" stroke="currentColor" strokeWidth="4" /></Ico>
          <select aria-label="Filter layers by" className={`w-[175px] pl-[44px] ${field}`}><option>Kind</option></select>
          <Chevron className="absolute right-2 mt-1" w={13} sw={2} />
        </div>
        <button aria-label="Pixel layers" className="ml-[23px]"><Ico w={24} h={20}><path d="M1 1h22v18H1z" fill="none" stroke="currentColor" strokeWidth="2.200" /><path d="M4 16l5-9 3 4 3-3 5 8z" /></Ico></button>
        <button aria-label="Adjustment layers" className="ml-[25px]"><Ico w={22} h={22} box="0 0 32 32">{halfCircle}</Ico></button>
        <button aria-label="Type layers" className="ml-[26px]"><Ico w={24} h={24} box="0 0 32 32">{typeGlyph}</Ico></button>
        <button aria-label="Shape layers" className="ml-[25px]"><Ico w={22} h={22}><path d="M3 5v12M19 5v12M5 3h12M5 19h12M1 1h4v4H1zM17 1h4v4h-4zM1 17h4v4H1zM17 17h4v4h-4z" fill="none" stroke="currentColor" strokeWidth="2" /></Ico></button>
        <button aria-label="Smart objects" className="ml-[27px]"><Ico w={21} h={24}><path d="M5 11V1.500h8L19.500 8v13H12" fill="none" stroke="currentColor" strokeWidth="2.200" /><path d="M12 1v8h8zM0 12h12v12H0z" /></Ico></button>
        <button aria-label="Toggle filtering" className="ml-[25px] h-9 w-[19px] rounded-full border-2 border-[#666666] bg-[#454545]"><span className="-mt-[18px] -ml-px block size-[17px] rounded-full bg-[#dcdcdc]" /></button>
      </div>
      <div className="flex h-14 shrink-0 items-center border-b-2 border-[#3f3f3f] pt-1 pl-[7px]">
        <div className="relative flex items-center">
          <select aria-label="Blend mode" className={`w-[259px] pl-4 ${field}`}><option>Normal</option></select>
          <Chevron className="absolute right-2 mt-1" w={13} sw={2} />
        </div>
        <Percent id="opacity" label="Opacity:" className="w-[196px] justify-end" />
      </div>
      <div className="flex h-[60px] shrink-0 items-center border-b-2 border-[#4a4a4a] pb-0.5 pl-3.5">
        <span className="w-16 text-[#cccccc]">Lock:</span>
        <button aria-label="Lock transparent pixels"><Ico w={22} h={22}><path fillRule="evenodd" d="M0 0h22v22H0zM2 2v5h6V2zM14 2v5h6V2zM8 7v6h6V7zM2 13v7h6v-7zM14 13v7h6v-7z" /></Ico></button>
        <button aria-label="Lock image pixels" className="ml-[22px]"><Ico w={26} h={28} box="0 0 32 31">{brush}</Ico></button>
        <button aria-label="Lock position" className="ml-[15px]"><Ico w={26} h={26} box="0 0 32 32">{tools[0].art}</Ico></button>
        <button aria-label="Lock artboard nesting" className="ml-[18px]"><Ico w={28} h={24}><path d="M5.500 5h12l5 5v9h-17z" fill="none" stroke="currentColor" strokeWidth="2.200" /><path d="M16 4v8h8zM0 3h3v2H0zM4 0h2v2H4zM22 0h2v2h-2zM26 3h2v2h-2zM0 19h3v2H0zM4 22h2v2H4zM22 22h2v2h-2zM26 19h2v2h-2z" /></Ico></button>
        <button aria-label="Lock all" className="ml-[20px]"><Ico w={20} h={24}><path fillRule="evenodd" d="M0 9q0-1 2-1h16q2 0 2 1v13q0 1-2 1H2q-2 0-2-1zM10 12a2.800 2.800 0 1 0 .1 0z" /><path d="M4.500 9c-1-10 12-10 11 0" fill="none" stroke="currentColor" strokeWidth="2.800" /></Ico></button>
        <Percent id="fill" label="Fill:" className="w-[187px] justify-end" />
      </div>
      <div className="flex min-h-0 flex-1 border-b-2 border-[#3f3f3f] bg-[#474747]">
        <div className="min-w-0 flex-1 bg-[#4b4b4b]">
          <div className="flex h-[83px] border-b-2 border-[#434343] bg-[#535353]">
            <button aria-label="Hide layer" className="flex w-[61px] shrink-0 items-center justify-center border-r-2 border-[#434343]"><Ico w={25} h={16}><path fillRule="evenodd" d="M0 8c6-10 19-10 25 0-6 10-19 10-25 0zM12.500 2.500a5.500 5.500 0 1 0 .1 0z" /><circle cx="12.500" cy="8" r="3" fill="#535353" /><circle cx="14" cy="6.500" r="1.500" /></Ico></button>
            <button className="flex flex-1 items-center bg-[#6a6a6a] pt-px pl-[3px] text-[#f0f0f0]">
              <span className="size-[72px] shrink-0 border-2 border-white p-0.5"><span className="block size-full border-2 border-[#2b2b2b] bg-[conic-gradient(#cbcbcb_25%,#ffffff_0_50%,#cbcbcb_0_75%,#ffffff_0)] bg-[length:8px_8px]" /></span>
              <span className="ml-[15px]">Roads</span>
            </button>
          </div>
        </div>
        <div className="w-8 shrink-0" />
      </div>
      <div className="flex h-[47px] shrink-0 items-center justify-end pr-[56px] pb-1">
        <button aria-label="Link layers" className="text-[#8f8f8f]"><Ico w={29} h={16}><path d="M12 4C8-1 1 1 1 8s7 9 11 4M17 4c4-5 11-3 11 4s-7 9-11 4" fill="none" stroke="currentColor" strokeWidth="2.400" /><path d="M8 6.500h13v3H8z" /></Ico></button>
        <button aria-label="Layer style" className="relative ml-[28px] flex w-[26px] text-[24px] leading-6 italic">fx<svg width="8" height="5" viewBox="0 0 8 5" fill="#fff" className="absolute top-[24px] left-[23px]" aria-hidden="true"><path d="M0 0h8L4 5z" /></svg></button>
        <button aria-label="Add mask" className="ml-[28px]"><Ico w={25} h={20}><path fillRule="evenodd" d="M1 0h23q1 0 1 1v18q0 1-1 1H1q-1 0-1-1V1q0-1 1-1zM12.500 4a6 6 0 1 0 .1 0z" /></Ico></button>
        <button aria-label="New adjustment layer" className="relative ml-[30px]"><Ico w={22} h={22} box="0 0 32 32">{halfCircle}</Ico><svg width="8" height="5" viewBox="0 0 8 5" fill="#fff" className="absolute top-[24px] left-[20px]" aria-hidden="true"><path d="M0 0h8L4 5z" /></svg></button>
        <button aria-label="New group" className="ml-[30px]"><Ico w={25} h={20}><path d="M0 3q0-3 3-3h7l3 3zM0 4h24q1 0 1 1v14q0 1-1 1H1q-1 0-1-1z" /></Ico></button>
        <button aria-label="New layer" className="ml-[30px]"><Ico w={23} h={22}><path d="M1 1h21v20H1z" fill="none" stroke="currentColor" strokeWidth="2.200" /><path d="M11.500 6v10M6.500 11h10" stroke="currentColor" strokeWidth="2" /></Ico></button>
        <button aria-label="Delete layer" className="ml-[31px] text-[#8f8f8f]"><Ico w={22} h={24}><path d="M0 5h22M7 5V1h8v4M3 5v18h16V5M8 9v11M11 9v11M14 9v11" fill="none" stroke="currentColor" strokeWidth="2" /></Ico></button>
      </div>
    </section>
  );
}

const readings = [
  ["GPU UTIL", "0 %"],
  ["GPU PWR", "9 W"],
  ["GPU TEMP", "43 °C"],
  ["CPU UTIL", "9 %"],
  ["CPU TEMP", "43.4 °C"],
  ["SYSTEM MEM UTIL", "26.7 GB"],
];

/** Click-through hardware monitor that floats above the window. */
function Monitor() {
  return (
    <>
      <div className="pointer-events-none absolute top-2.5 right-[9px] h-[344px] w-[432px] bg-black/20" />
      <dl className="pointer-events-none absolute top-2.5 right-[9px] w-[432px] px-[15px] text-[26px] text-[#383838] mix-blend-plus-lighter">
        {readings.map(([k, v]) => (
          <div key={k} className="flex h-[58px] items-center justify-between"><dt>{k}</dt><dd>{v}</dd></div>
        ))}
      </dl>
    </>
  );
}

export default function App() {
  return (
    <div className="relative flex h-screen flex-col overflow-hidden border-b-4 border-[#3b3838] bg-[#535353] font-['Open_Sans','Noto_Sans',sans-serif] leading-normal">
      <MenuBar />
      <OptionsBar />
      <div className="flex min-h-0 flex-1">
        <Toolbar />
        <Document />
        <div className="flex w-[655px] shrink-0 flex-col border-l-2 border-r border-[#383838] bg-[#424242]">
          <div className="flex h-[22px] shrink-0 items-center pr-3 pl-[54px] text-[#dcdcdc]">
            <DoubleChevron left />
            <span className="ml-auto flex"><DoubleChevron /></span>
          </div>
          <div className="flex min-h-0 flex-1 border-t-2 border-[#383838]">
            <div className="ml-0.5 flex w-[78px] shrink-0 border-x-2 border-[#383838]"><IconDock /></div>
            <div className="ml-0.5 flex min-w-0 flex-1 flex-col border-l-2 border-[#383838]">
              <ColorPanel />
              <AdjustmentsPanel />
              <LayersPanel />
            </div>
          </div>
        </div>
      </div>
      <Monitor />
    </div>
  );
}
